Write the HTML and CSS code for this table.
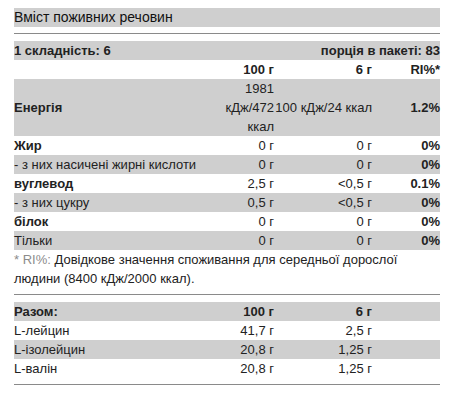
FILE: index.html
```html
<!DOCTYPE html>
<html lang="uk">
<head>
    <meta charset="UTF-8">
    <meta name="viewport" content="width=device-width, initial-scale=1.0">
    <title>Вміст поживних речовин</title>
    <link rel="stylesheet" href="styles.css">
</head>
<body>
    <div class="nutrition">
        <div class="title">Вміст поживних речовин</div>
        <hr class="line">

        <table class="facts">
            <colgroup>
                <col class="c-label">
                <col class="c-100">
                <col class="c-6">
                <col class="c-ri">
            </colgroup>
            <tr class="grey bold">
                <td colspan="2">1 складність: 6</td>
                <td colspan="2" class="num">порція в пакеті: 83</td>
            </tr>
            <tr class="bold">
                <td></td>
                <td class="num">100 г</td>
                <td class="num">6 г</td>
                <td class="num">RI%*</td>
            </tr>
            <tr class="grey">
                <td class="bold">Енергія</td>
                <td class="num">1981 кДж/472 ккал</td>
                <td class="num nowrap">100 кДж/24 ккал</td>
                <td class="num bold">1.2%</td>
            </tr>
            <tr>
                <td class="bold">Жир</td>
                <td class="num">0 г</td>
                <td class="num">0 г</td>
                <td class="num bold">0%</td>
            </tr>
            <tr class="grey">
                <td>- з них насичені жирні кислоти</td>
                <td class="num">0 г</td>
                <td class="num">0 г</td>
                <td class="num bold">0%</td>
            </tr>
            <tr>
                <td class="bold">вуглевод</td>
                <td class="num">2,5 г</td>
                <td class="num">&lt;0,5 г</td>
                <td class="num bold">0.1%</td>
            </tr>
            <tr class="grey">
                <td>- з них цукру</td>
                <td class="num">0,5 г</td>
                <td class="num">&lt;0,5 г</td>
                <td class="num bold">0%</td>
            </tr>
            <tr>
                <td class="bold">білок</td>
                <td class="num">0 г</td>
                <td class="num">0 г</td>
                <td class="num bold">0%</td>
            </tr>
            <tr class="grey">
                <td>Тільки</td>
                <td class="num">0 г</td>
                <td class="num">0 г</td>
                <td class="num bold">0%</td>
            </tr>
        </table>

        <p class="note"><span class="mark">* RI%:</span> Довідкове значення споживання для середньої дорослої людини (8400 кДж/2000 ккал).</p>
        <hr class="line">

        <table class="facts">
            <colgroup>
                <col class="c-label">
                <col class="c-100">
                <col class="c-6">
                <col class="c-ri">
            </colgroup>
            <tr class="grey bold">
                <td>Разом:</td>
                <td class="num">100 г</td>
                <td class="num">6 г</td>
                <td></td>
            </tr>
            <tr>
                <td>L-лейцин</td>
                <td class="num">41,7 г</td>
                <td class="num">2,5 г</td>
                <td></td>
            </tr>
            <tr class="grey">
                <td>L-ізолейцин</td>
                <td class="num">20,8 г</td>
                <td class="num">1,25 г</td>
                <td></td>
            </tr>
            <tr>
                <td>L-валін</td>
                <td class="num">20,8 г</td>
                <td class="num">1,25 г</td>
                <td></td>
            </tr>
        </table>
        <hr class="line">
    </div>
</body>
</html>
```

FILE: styles.css
```css
body {
    margin: 0;
    background: #fff;
    font-family: "Liberation Sans", Arial, sans-serif;
    font-size: 13px;
    color: #222;
}
.nutrition {
    width: 426px;
    padding: 8px 0 0 14px;
}
.title {
    background: #cfcfcf;
    font-size: 14px;
    line-height: 19px;
    color: #111;
}
.line {
    border: none;
    border-top: 1px solid #8a8a8a;
    margin: 6px 0 7px;
    height: 0;
}
.facts {
    width: 426px;
    border-collapse: collapse;
    table-layout: fixed;
}
.c-label { width: 210px; }
.c-100 { width: 50px; }
.c-6 { width: 98px; }
.c-ri { width: 68px; }
.facts td {
    padding: 0;
    line-height: 19px;
    vertical-align: middle;
}
.nowrap {
    white-space: nowrap;
}
.grey {
    background: #cfcfcf;
}
.bold {
    font-weight: bold;
}
.num {
    text-align: right;
}
.note {
    margin: 0;
    line-height: 19px;
}
.note .mark {
    color: #8c8c8c;
}
```
